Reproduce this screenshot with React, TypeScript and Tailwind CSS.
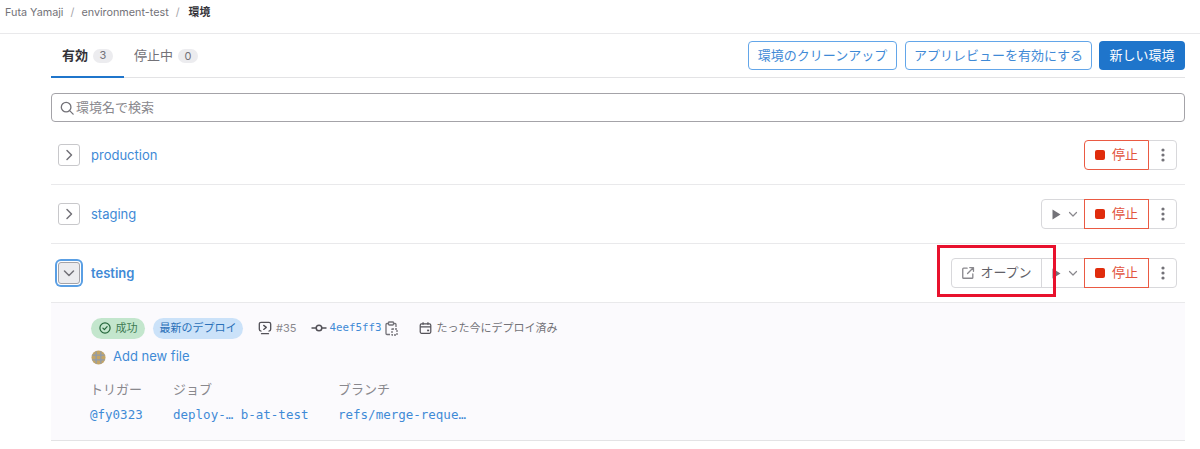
import React from "react";

const sans = "[font-family:Inter,'Noto_Sans_CJK_JP',sans-serif]";
const mono = "[font-family:'DejaVu_Sans_Mono','Noto_Sans_CJK_JP',monospace] text-[12.5px]";

function Chevron({ dir }: { dir: "right" | "down" }) {
  return (
    <svg width="16" height="16" viewBox="0 0 16 16" fill="none" stroke="#737278" strokeWidth="1.5" strokeLinecap="round" strokeLinejoin="round">
      {dir === "right" ? <path d="M6 3.5 10.5 8 6 12.5" /> : <path d="M3.5 6 8 10.5 12.5 6" />}
    </svg>
  );
}

function Kebab() {
  return (
    <button className="-ml-px flex h-[30px] w-[29px] items-center justify-center rounded-r border border-[#d8d8db] bg-white">
      <svg width="4" height="14" viewBox="0 0 4 14" fill="#737278">
        <circle cx="2" cy="2" r="1.6" />
        <circle cx="2" cy="7" r="1.6" />
        <circle cx="2" cy="12" r="1.6" />
      </svg>
    </button>
  );
}

function Stop({ first }: { first?: boolean }) {
  return (
    <button className={`relative z-10 -ml-px flex h-[30px] w-[65px] items-center justify-center gap-[7px] border border-[#ea5a43] bg-white text-[13px] text-[#e2553f] ${first ? "rounded-l" : ""}`}>
      <span className="h-[10px] w-[10px] rounded-[2px] bg-[#e02c0c]" />
      停止
    </button>
  );
}

function PlayBtn({ rounded }: { rounded: boolean }) {
  return (
    <button className={`flex h-[30px] w-[44px] items-center gap-[7px] border border-[#d8d8db] bg-white pl-[10px] ${rounded ? "rounded-l" : "-ml-px"}`}>
      <svg width="9" height="11" viewBox="0 0 9 11" fill="#737278"><path d="M0.5 0.5v10L8.5 5.5z" /></svg>
      <svg width="10" height="10" viewBox="0 0 10 10" fill="none" stroke="#89888d" strokeWidth="1.2" strokeLinecap="round" strokeLinejoin="round"><path d="M1.5 3.5 5 7l3.5-3.5" /></svg>
    </button>
  );
}

function Row({ name, children }: { name: string; children: React.ReactNode }) {
  return (
    <div className="flex h-[59px] items-center justify-between border-b border-[#e9e9eb] pr-2 pl-[7px]">
      <div className="flex items-center gap-[11px]">
        <button className="flex h-[22px] w-[22px] items-center justify-center rounded-[3px] border border-[#c8c8cb] bg-white">
          <Chevron dir="right" />
        </button>
        <a className="mt-[2px] text-[13px] text-[#3f8ad6]">{name}</a>
      </div>
      <div className="flex items-center">{children}</div>
    </div>
  );
}

export default function App() {
  return (
    <div className={`relative h-[449px] w-[1200px] overflow-hidden bg-white ${sans}`}>
      <nav className="flex h-[34px] items-start gap-[7px] border-b border-[#e9e9eb] pt-[4px] pl-[5px] text-[10.8px] leading-[17px] text-[#737278]">
        <span>Futa Yamaji</span>
        <span className="text-[#a4a3a8]">/</span>
        <span>environment-test</span>
        <span className="text-[#a4a3a8]">/</span>
        <span className="ml-[2px] font-bold text-[#333238]">環境</span>
      </nav>

      <main className="mr-[15px] ml-[51px]">
        <div className="flex h-[44px] items-center justify-between border-b border-[#e3e3e5]">
          <div className="flex h-full items-stretch">
            <div className="-mb-px flex w-[73px] items-center justify-center gap-[5px] border-b-2 border-[#1f75cb] pt-[1px] text-[13px] font-semibold text-[#333238]">
              有効
              <span className="flex h-[14px] min-w-[20px] items-center justify-center rounded-full bg-[#ececef] text-[11px] font-normal text-[#737278]">3</span>
            </div>
            <div className="ml-[10px] flex items-center gap-[5px] pt-[1px] text-[13px] text-[#737278]">
              停止中
              <span className="flex h-[14px] min-w-[20px] items-center justify-center rounded-full bg-[#ececef] text-[11px] text-[#737278]">0</span>
            </div>
          </div>
          <div className="flex items-center gap-[7px]">
            <button className="h-[29px] w-[149px] rounded border border-[#63a6e9] bg-white text-[13px] text-[#3f8ad6]">環境のクリーンアップ</button>
            <button className="ml-px h-[29px] w-[187px] rounded border border-[#63a6e9] bg-white text-[13px] text-[#3f8ad6]">アプリレビューを有効にする</button>
            <button className="h-[29px] w-[86px] rounded bg-[#1f75cb] text-[13px] text-white">新しい環境</button>
          </div>
        </div>

        <div className="mt-[15px] flex h-[29px] items-center gap-[2px] rounded border border-[#a4a3a8] bg-white pl-[8px] text-[13px] text-[#89888d]">
          <svg width="14" height="14" viewBox="0 0 16 16" fill="none" stroke="#737278" strokeWidth="1.5" strokeLinecap="round">
            <circle cx="7" cy="7" r="5.5" />
            <path d="m11 11 4 4" />
          </svg>
          環境名で検索
        </div>

        <div className="mt-[4px]">
          <Row name="production">
            <Stop first />
            <Kebab />
          </Row>
          <Row name="staging">
            <PlayBtn rounded />
            <Stop />
            <Kebab />
          </Row>

          <div className="flex h-[59px] items-center justify-between border-b border-[#e9e9eb] pr-2 pl-[7px]">
            <div className="flex items-center gap-[11px]">
              <button className="flex h-[22px] w-[22px] items-center justify-center rounded-[3px] border border-[#a4a3a8] bg-[#ececef] shadow-[0_0_0_1px_#fff,0_0_0_3px_#5a9fe4]">
                <Chevron dir="down" />
              </button>
              <a className="mt-[2px] text-[13px] font-semibold text-[#3f8ad6]">testing</a>
            </div>
            <div className="flex items-center">
              <button className="flex h-[30px] w-[91px] items-center justify-center gap-[5px] rounded-l border border-[#d8d8db] bg-white text-[13px] text-[#626168]">
                <svg width="14" height="14" viewBox="0 0 16 16" fill="none" stroke="#89888d" strokeWidth="1.5" strokeLinecap="round" strokeLinejoin="round">
                  <path d="M7 2.5H3a1 1 0 0 0-1 1V13a1 1 0 0 0 1 1h9.5a1 1 0 0 0 1-1V9" />
                  <path d="M10 1.75h4.25V6M14 2 7.5 8.5" />
                </svg>
                オープン
              </button>
              <PlayBtn rounded={false} />
              <Stop />
              <Kebab />
            </div>
          </div>

          <section className="h-[138px] border-b border-[#e3e3e5] bg-[#fbfafd] pt-[14px] pl-[40px]">
            <div className="flex h-[22px] items-center text-[11px]">
              <span className="flex h-[21px] w-[54px] items-center justify-center gap-[5px] rounded-full bg-[#c3e6cd] text-[#3d7a52]">
                <svg width="12" height="12" viewBox="0 0 16 16" fill="none" stroke="#24663b" strokeWidth="1.6" strokeLinecap="round" strokeLinejoin="round">
                  <circle cx="8" cy="8" r="6.8" />
                  <path d="m5.2 8.2 2 2 3.6-4" />
                </svg>
                成功
              </span>
              <span className="ml-[8px] flex h-[21px] w-[90px] items-center justify-center rounded-full bg-[#cbe2f9] text-[#2a70b8]">最新のデプロイ</span>
              <svg className="ml-[15px]" width="14" height="14" viewBox="0 0 16 16" fill="none" stroke="#535158" strokeWidth="1.5" strokeLinecap="round" strokeLinejoin="round">
                <path d="M4 14.5h8M3.5 11.5A2 2 0 0 1 1.5 9.5V3.5a2 2 0 0 1 2-2h9a2 2 0 0 1 2 2v6a2 2 0 0 1-2 2" />
                <path d="m6.5 5 3 2.3-3 2.3" />
              </svg>
              <span className="ml-[4px] text-[#89888d]">#35</span>
              <svg className="ml-[15px]" width="16" height="12" viewBox="0 0 16 12" fill="none" stroke="#535158" strokeWidth="1.5">
                <circle cx="8" cy="6" r="2.8" />
                <path d="M0.5 6h4.5M11 6h4.5" />
              </svg>
              <span className="ml-[2px] [font-family:'DejaVu_Sans_Mono',monospace] text-[10.8px] text-[#3f8ad6]">4eef5ff3</span>
              <svg className="ml-[4px]" width="13" height="15" viewBox="0 0 13 15" fill="none" stroke="#737278" strokeWidth="1.3" strokeLinejoin="round">
                <path d="M4 2.5H2a1 1 0 0 0-1 1v9a1 1 0 0 0 1 1h3M9 2.5h1a1 1 0 0 1 1 1V6" />
                <rect x="3.5" y="1" width="5" height="3" rx="0.8" />
                <path d="M7 8h5v6H7z" strokeDasharray="2 1" />
              </svg>
              <svg className="ml-[21px]" width="13" height="14" viewBox="0 0 16 16" fill="none" stroke="#535158" strokeWidth="1.5" strokeLinejoin="round">
                <rect x="1.5" y="3" width="13" height="11.5" rx="1.5" />
                <path d="M1.5 6.5h13M5 1v3M11 1v3" />
                <path d="M10 10h2.5v2H10z" fill="#535158" stroke="none" />
              </svg>
              <span className="ml-[4px] text-[#737278]">たった今にデプロイ済み</span>
            </div>

            <div className="mt-[7px] flex h-[22px] items-center gap-[6px] text-[13px] text-[#3f8ad6]">
              <svg width="15" height="15" viewBox="0 0 16 16">
                <circle cx="8" cy="8" r="7.5" fill="#c4a566" />
                <path d="M1.5 5.5h13M1.5 10.5h13M5.5 1.5v13M10.5 1.5v13" stroke="#8d9bb0" strokeWidth="1.3" />
              </svg>
              <span className="ml-[1px]">Add new file</span>
            </div>

            <div className="mt-[11px] -ml-px flex">
              <div className="w-[83px]">
                <div className="text-[13px] leading-[20px] text-[#89888d]">トリガー</div>
                <div className={`mt-[7px] leading-[18px] text-[#3f8ad6] ${mono}`}>@fy0323</div>
              </div>
              <div className="w-[165px]">
                <div className="text-[13px] leading-[20px] text-[#89888d]">ジョブ</div>
                <div className={`mt-[7px] leading-[18px] whitespace-pre text-[#3f8ad6] ${mono}`}>deploy-… b-at-test</div>
              </div>
              <div>
                <div className="text-[13px] leading-[20px] text-[#89888d]">ブランチ</div>
                <div className={`mt-[7px] leading-[18px] text-[#3f8ad6] ${mono}`}>refs/merge-reque…</div>
              </div>
            </div>
          </section>
        </div>
      </main>

      <div className="absolute top-[245px] left-[937px] h-[52px] w-[119px] border-[3px] border-[#e8112d]" />
    </div>
  );
}
